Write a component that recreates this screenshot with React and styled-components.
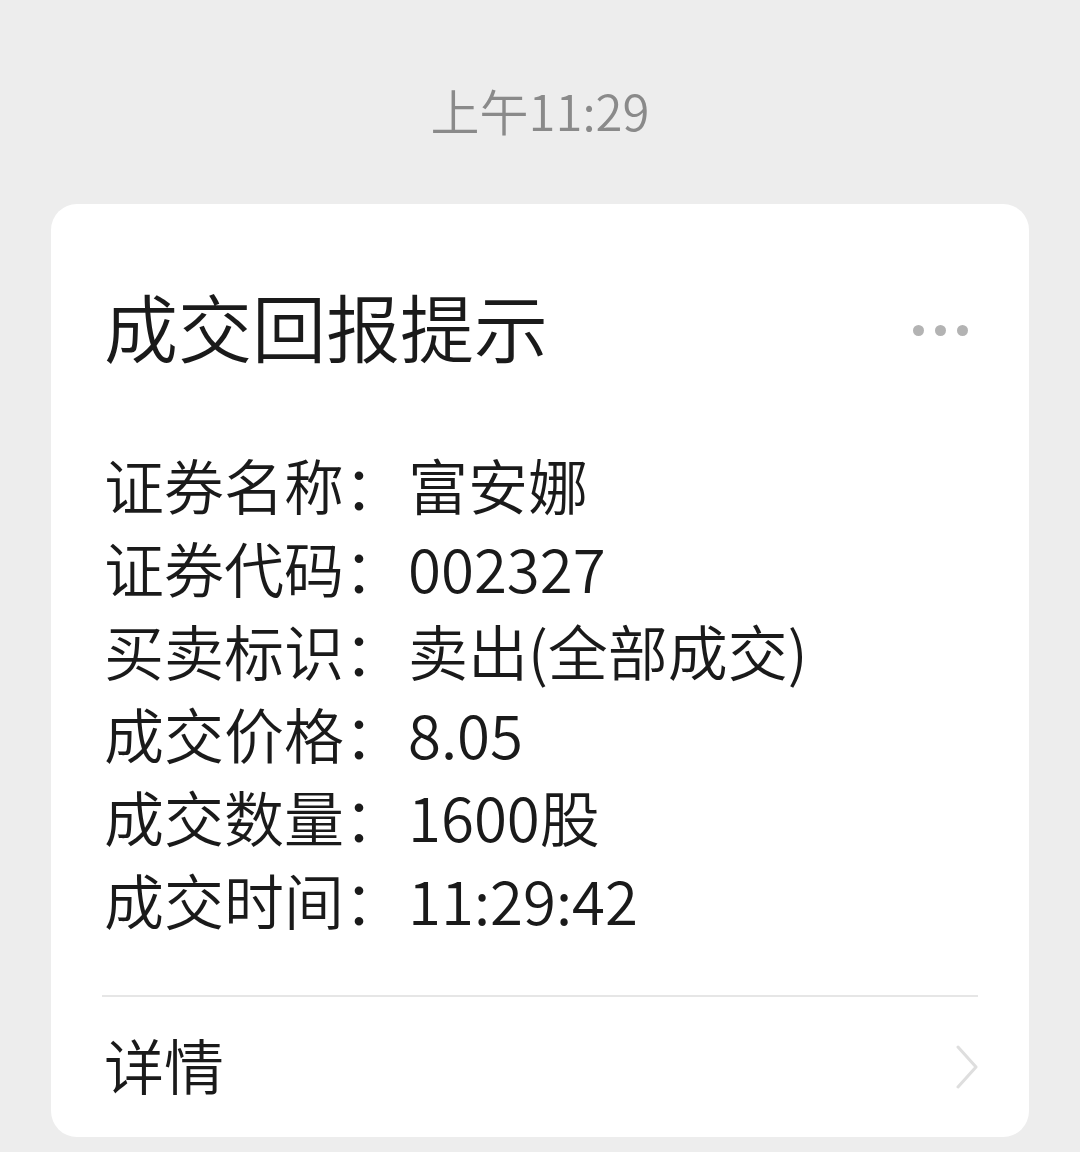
import React from 'react';
import { styled, createGlobalStyle } from 'styled-components';

const fields = [
  { label: '证券名称', value: '富安娜' },
  { label: '证券代码', value: '002327' },
  { label: '买卖标识', value: '卖出(全部成交)' },
  { label: '成交价格', value: '8.05' },
  { label: '成交数量', value: '1600股' },
  { label: '成交时间', value: '11:29:42' },
];

function App() {
  return (
    <Page>
      <GlobalStyle />
      <Time>上午11:29</Time>
      <Card>
        <Header>
          <Title>成交回报提示</Title>
          <More>
            <Dot />
            <Dot />
            <Dot />
          </More>
        </Header>
        <Fields>
          {fields.map(f => (
            <Row key={f.label}>
              <Label>{f.label}：</Label>
              <Value>{f.value}</Value>
            </Row>
          ))}
        </Fields>
        <Divider />
        <Footer>
          <FooterText>详情</FooterText>
          <svg width='24' height='44' viewBox='0 0 24 44'>
            <polyline
              points='3,2 21,22 3,42'
              fill='none'
              stroke='#dedede'
              strokeWidth='3'
              strokeLinecap='round'
              strokeLinejoin='round'
            />
          </svg>
        </Footer>
      </Card>
    </Page>
  );
}

export default App;

const GlobalStyle = createGlobalStyle`
  body {
    margin: 0;
    background: #ededed;
    font-family: "Noto Sans CJK SC", "Noto Sans", sans-serif;
    font-weight: 350;
  }
`;

const Page = styled.div`
  width: 1080px;
  min-height: 1152px;
  padding-top: 80px;
  box-sizing: border-box;
`;

const Time = styled.div`
  text-align: center;
  font-size: 49px;
  line-height: 60px;
  color: #8a8a8a;
`;

const Card = styled.div`
  margin: 64px 51px 0;
  background: #fff;
  border-radius: 26px;
`;

const Header = styled.div`
  display: flex;
  align-items: center;
  justify-content: space-between;
  padding: 81px 61px 0 53px;
  height: 80px;
  box-sizing: content-box;
`;

const Title = styled.div`
  font-size: 74px;
  line-height: 80px;
  color: #1a1a1a;
`;

const More = styled.div`
  display: flex;
  gap: 11px;
  margin-top: 10px;
`;

const Dot = styled.span`
  width: 11px;
  height: 11px;
  border-radius: 50%;
  background: #b3b3b3;
`;

const Fields = styled.div`
  margin-top: 77px;
  padding-left: 53px;
`;

const Row = styled.div`
  display: flex;
  font-size: 60px;
  line-height: 83px;
  color: #1a1a1a;
`;

const Label = styled.span``;

const Value = styled.span`
  margin-left: 4px;
`;

const Divider = styled.div`
  margin: 55px 51px 0;
  height: 2px;
  background: #e6e6e6;
`;

const Footer = styled.div`
  display: flex;
  align-items: center;
  justify-content: space-between;
  height: 140px;
  padding: 0 50px 0 53px;
`;

const FooterText = styled.div`
  font-size: 60px;
  color: #1a1a1a;
  margin-top: -8px;
`;
